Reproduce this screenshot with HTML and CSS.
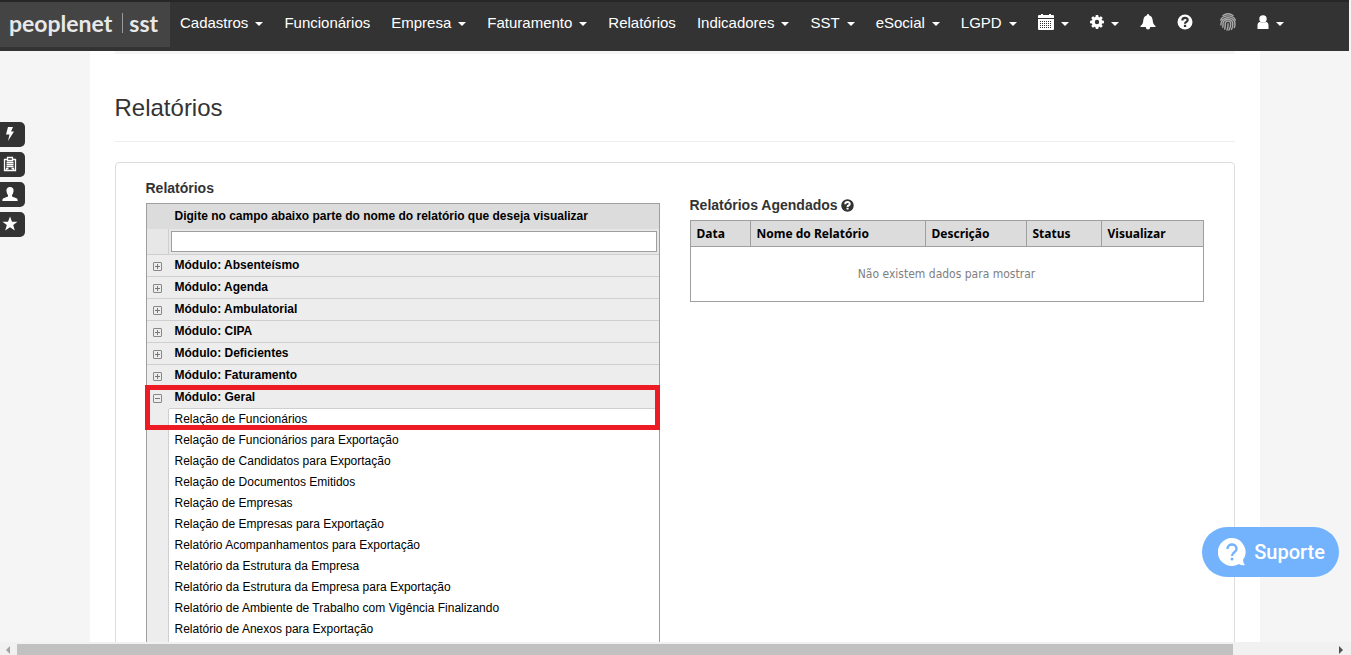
FILE: index.html
```
<!DOCTYPE html>
<html lang="pt-BR">
<head>
    <meta charset="UTF-8">
    <meta name="viewport" content="width=device-width, initial-scale=1">
    <title>Relatórios</title>
    <link rel="stylesheet" href="styles.css">
</head>
<body>
    <header class="navbar">
        <a href="#" class="brand"><span>peoplenet</span><span class="brand-sst">sst</span></a>
        <nav class="menu">
            <a href="#">Cadastros <i class="caret"></i></a>
            <a href="#">Funcionários</a>
            <a href="#">Empresa <i class="caret"></i></a>
            <a href="#">Faturamento <i class="caret"></i></a>
            <a href="#">Relatórios</a>
            <a href="#">Indicadores <i class="caret"></i></a>
            <a href="#">SST <i class="caret"></i></a>
            <a href="#">eSocial <i class="caret"></i></a>
            <a href="#">LGPD <i class="caret"></i></a>
            <a href="#" aria-label="Calendário">
                <svg width="16" height="16" viewBox="0 0 16 16"><path fill="#fff" d="M1 1h2V0h2v1h6V0h2v1h2q1 0 1 1v2H0V2q0-1 1-1zM0 5h16v10q0 1-1 1H1q-1 0-1-1z"/><path stroke="#333" stroke-width="1" stroke-dasharray="1 1" d="M2 7.500h12M2 9.500h12M2 11.500h12M2 13.500h12"/></svg>
                <i class="caret"></i>
            </a>
            <a href="#" aria-label="Configurações">
                <svg width="14" height="16" viewBox="0 0 14 16"><g fill="#fff"><rect x="5.500" y="1" width="3" height="14" rx="1"/><rect x="5.500" y="1" width="3" height="14" rx="1" transform="rotate(45 7 8)"/><rect x="5.500" y="1" width="3" height="14" rx="1" transform="rotate(90 7 8)"/><rect x="5.500" y="1" width="3" height="14" rx="1" transform="rotate(135 7 8)"/></g><circle cx="7" cy="8" r="3.700" fill="#333" stroke="#fff" stroke-width="3"/></svg>
                <i class="caret"></i>
            </a>
            <a href="#" aria-label="Notificações">
                <svg width="16" height="16" viewBox="0 0 16 16"><path fill="#fff" d="M8 0q1.300 0 1.300 1.500C12 2.200 12.500 4.500 12.800 7c.3 2.500 1 3.500 2.700 5v1h-5.200Q10 15.500 8 15.500T5.700 13H.5v-1c1.700-1.500 2.400-2.500 2.700-5 .3-2.500.8-4.800 3.500-5.500Q6.700 0 8 0z"/></svg>
            </a>
            <a href="#" aria-label="Ajuda">
                <svg width="16" height="16" viewBox="0 0 16 16"><circle cx="8" cy="8" r="7.500" fill="#fff"/><path fill="none" stroke="#333" stroke-width="2.200" d="M5.300 6.500C5.300 3 10.700 3 10.700 6c0 1.900-2.700 1.800-2.700 3.700"/><path fill="#333" d="M6.900 10.800h2.300V13H6.900z"/></svg>
            </a>
            <a href="#" class="finger" aria-label="Biometria">
                <svg width="16" height="18" viewBox="0 0 16 18"><g fill="none" stroke="#aaa" stroke-width="1.400" stroke-linecap="round"><path d="M3 2.500Q8-1 13 2.500"/><path d="M.7 7C3 1.500 13 1.500 15.300 7"/><path d="M1 12C0 3 15 2 15 11q0 2-.7 3.500"/><path d="M2.700 14.300Q3.300 13 3 10.500C3 5 12.800 5 12.800 11q0 3-1.300 5.300"/><path d="M4.700 16Q5.500 13.500 5.200 10.500C5.500 7.300 10.700 7.300 10.700 11q0 3.500-1.800 6"/><path d="M7 17Q8.300 14 8 10.700"/></g></svg>
            </a>
            <a href="#" aria-label="Usuário">
                <svg width="12" height="16" viewBox="0 0 12 16"><circle cx="6" cy="5" r="3.700" fill="#fff"/><path fill="#fff" d="M.5 15V11.500C.5 9.500 1.500 8 3 8q3 1.500 6 0c1.500 0 2.500 1.500 2.500 3.500V15z"/></svg>
                <i class="caret"></i>
            </a>
        </nav>
    </header>

    <aside class="shortcuts">
        <button aria-label="Acesso rápido"><svg width="16" height="16" viewBox="0 0 16 16"><path fill="#fff" d="M6 1h5L9 5.500h3L6 15l1.500-6.500H4z"/></svg></button>
        <button aria-label="Empresa"><svg width="16" height="16" viewBox="0 0 16 16"><path fill="none" stroke="#fff" stroke-width="1.300" d="M5.500 3.500h-3v11h11v-11h-3M5.500 1.500h5v3h-5zM4.500 6.500h7M4.500 8.500h7M4.500 10.500h7M4.500 14v-1.500h2M11.500 14v-1.500h-2"/></svg></button>
        <button aria-label="Funcionário"><svg width="16" height="16" viewBox="0 0 16 16"><path fill="#fff" d="M8 1c2.500 0 4 1.500 3.500 4.500Q11 8 10 9v1.500l5 2q.7.500.7 2.500H.3q0-2 .7-2.500l5-2V9Q5 8 4.500 5.500C4 2.500 5.500 1 8 1z"/></svg></button>
        <button aria-label="Favoritos"><svg width="16" height="16" viewBox="0 0 16 16"><path fill="#fff" d="M8 .5l2 5.200h5.500L11.200 9l1.600 5.500L8 11.300l-4.800 3.200L4.800 9 .5 5.700H6z"/></svg></button>
    </aside>

    <main class="page">
        <div class="container">
            <div class="top-line"></div>
            <h1>Relatórios</h1>
            <div class="panel">
                <section>
                    <h2 id="lblRelatorios">Relatórios</h2>
                    <table class="tree" aria-labelledby="lblRelatorios">
                        <thead>
                            <tr><th class="btn-col"></th><th><label for="filtro">Digite no campo abaixo parte do nome do relatório que deseja visualizar</label></th></tr>
                        </thead>
                        <tbody>
                            <tr class="filter"><td></td><td><input type="text" id="filtro"></td></tr>
                            <tr class="group"><td><button class="expand" aria-label="Expandir"></button></td><td>Módulo: Absenteísmo</td></tr>
                            <tr class="group"><td><button class="expand" aria-label="Expandir"></button></td><td>Módulo: Agenda</td></tr>
                            <tr class="group"><td><button class="expand" aria-label="Expandir"></button></td><td>Módulo: Ambulatorial</td></tr>
                            <tr class="group"><td><button class="expand" aria-label="Expandir"></button></td><td>Módulo: CIPA</td></tr>
                            <tr class="group"><td><button class="expand" aria-label="Expandir"></button></td><td>Módulo: Deficientes</td></tr>
                            <tr class="group"><td><button class="expand" aria-label="Expandir"></button></td><td>Módulo: Faturamento</td></tr>
                            <tr class="group marked"><td><button class="expand open" aria-label="Recolher"></button><div class="highlight"></div></td><td>Módulo: Geral</td></tr>
                            <tr class="item"><td></td><td>Relação de Funcionários</td></tr>
                            <tr class="item"><td></td><td>Relação de Funcionários para Exportação</td></tr>
                            <tr class="item"><td></td><td>Relação de Candidatos para Exportação</td></tr>
                            <tr class="item"><td></td><td>Relação de Documentos Emitidos</td></tr>
                            <tr class="item"><td></td><td>Relação de Empresas</td></tr>
                            <tr class="item"><td></td><td>Relação de Empresas para Exportação</td></tr>
                            <tr class="item"><td></td><td>Relatório Acompanhamentos para Exportação</td></tr>
                            <tr class="item"><td></td><td>Relatório da Estrutura da Empresa</td></tr>
                            <tr class="item"><td></td><td>Relatório da Estrutura da Empresa para Exportação</td></tr>
                            <tr class="item"><td></td><td>Relatório de Ambiente de Trabalho com Vigência Finalizando</td></tr>
                            <tr class="item last"><td></td><td>Relatório de Anexos para Exportação</td></tr>
                        </tbody>
                    </table>
                </section>
                <section class="scheduled">
                    <h2 id="lblAgendados">Relatórios Agendados
                        <svg width="13" height="13" viewBox="0 0 16 16"><circle cx="8" cy="8" r="7.700" fill="#333"/><path fill="none" stroke="#fff" stroke-width="2.400" d="M5.200 6.500C5.200 3 10.800 3 10.800 6c0 1.900-2.800 1.800-2.800 3.700"/><path fill="#fff" d="M6.800 10.800h2.500V13H6.800z"/></svg>
                    </h2>
                    <table class="grid" aria-labelledby="lblAgendados">
                        <thead>
                            <tr><th class="col-data">Data</th><th class="col-nome">Nome do Relatório</th><th class="col-desc">Descrição</th><th class="col-status">Status</th><th>Visualizar</th></tr>
                        </thead>
                        <tbody>
                            <tr><td colspan="5">Não existem dados para mostrar</td></tr>
                        </tbody>
                    </table>
                </section>
            </div>
        </div>
    </main>

    <button class="support">
        <svg width="28" height="28" viewBox="0 0 28 28"><path fill="#fff" d="M14 0a14 14 0 1 0 7 26q3 2 6 1-2-2-2-5A14 14 0 0 0 14 0z"/><path fill="none" stroke="#73b3fe" stroke-width="2.400" d="M9.500 11c0-6 9-6 9 0 0 3.500-4.500 3.200-4.500 7"/><circle cx="14" cy="21" r="1.500" fill="#73b3fe"/></svg>
        Suporte
    </button>

    <footer class="scrollbar">
        <span class="arrow left"></span>
        <span class="track"><span class="thumb"></span></span>
        <span class="arrow right"></span>
    </footer>
</body>
</html>
```
FILE: styles.css
```
* {
    box-sizing: border-box;
}

body {
    display: flex;
    flex-direction: column;
    height: 100vh;
    margin: 0;
    overflow: hidden;
    background-color: #f5f5f5;
    color: #333;
    font-family: "Liberation Sans", Arial, sans-serif;
    font-size: 12px;
}

.navbar {
    display: flex;
    flex: none;
    height: 51px;
    margin-right: 2px;
    border-top: 2px solid #262626;
    background-color: #333;
}

.brand {
    display: flex;
    align-items: center;
    width: 170px;
    height: 45px;
    padding: 0 0 4px 9px;
    background-color: #444;
    color: #e8e8e8;
    font-family: Lato, sans-serif;
    font-size: 23px;
    font-weight: bold;
    line-height: 20px;
    text-decoration: none;
}

.brand-sst {
    margin-left: 10px;
    padding-left: 6px;
    border-left: 1px solid #999;
}

.menu {
    display: flex;
    gap: 21px;
    height: 40px;
    padding-left: 10px;
}

.menu a {
    display: flex;
    align-items: center;
    gap: 7px;
    color: #fff;
    font-size: 15px;
    text-decoration: none;
    white-space: nowrap;
}

.menu a:hover {
    color: #ccc;
}

.menu .finger {
    margin: 0 0 0 6px;
}

.caret {
    border: 4px solid transparent;
    border-top-color: #fff;
    border-bottom: 0;
    margin-top: 3px;
}

.shortcuts {
    position: fixed;
    top: 122px;
    left: 0;
    display: flex;
    flex-direction: column;
    gap: 5px;
}

.shortcuts button {
    width: 25px;
    height: 25px;
    padding: 0 0 2px 2px;
    border: 0;
    border-radius: 0 5px 5px 0;
    background-color: #333;
    text-align: left;
    cursor: pointer;
}

.shortcuts svg {
    display: block;
}

.page {
    flex: 1;
    margin-right: 2px;
    overflow: hidden;
}

.container {
    max-width: 1170px;
    margin: 0 auto;
    padding: 0 25px;
    background-color: #fff;
}

.top-line {
    height: 3px;
    background-color: #f5f5f5;
}

h1 {
    margin: 0 0 20px;
    padding: 40px 0 19px;
    border-bottom: 1px solid #eee;
    font-size: 24px;
    font-weight: normal;
    line-height: 28px;
}

.panel {
    display: grid;
    grid-template-columns: 1fr 1fr;
    gap: 30px;
    padding: 17px 30px;
    border: 1px solid #ddd;
    border-radius: 4px;
}

h2 {
    margin: 0;
    font-size: 14px;
    line-height: 16px;
    padding-bottom: 7px;
}

h2 svg {
    vertical-align: -2px;
}

table {
    width: 100%;
    border-spacing: 0;
    table-layout: fixed;
    color: #000;
}

.tree {
    border: 1px solid #9f9f9f;
}

.tree th,
.tree td {
    padding: 0 6px 2px;
    text-align: left;
}

.tree th {
    height: 25px;
    background-color: #dcdcdc;
}

.tree .btn-col {
    width: 22px;
}

.tree .filter td {
    height: 26px;
    padding: 0 2px;
    border-bottom: 1px solid #cfcfcf;
    background-color: #e7e7e7;
}

.filter td:first-child,
.item td:first-child {
    border-right: 1px solid #cfcfcf;
}

.filter input {
    display: block;
    width: 100%;
    height: 21px;
    border: 1px solid #9f9f9f;
}

.tree .group td {
    height: 22px;
    border-bottom: 1px solid #cfcfcf;
    background-color: #ededed;
    font-weight: bold;
}

.tree .marked td:first-child {
    border-bottom-color: #ededed;
}

.expand {
    display: block;
    width: 9px;
    height: 9px;
    margin-top: 4px;
    padding: 0;
    border: 1px solid #888;
    border-radius: 1px;
    background: linear-gradient(#777, #777) center / 5px 1px no-repeat,
                linear-gradient(#777, #777) center / 1px 5px no-repeat;
}

.expand.open {
    background: linear-gradient(#777, #777) center / 5px 1px no-repeat;
}

.item td {
    height: 21px;
}

.item td:first-child {
    background-color: #ededed;
}

.tree .last td {
    height: 42px;
    padding-top: 3px;
    vertical-align: top;
}

/* red frame over the open module and its first report */
.marked {
    position: relative;
}

.highlight {
    position: absolute;
    z-index: 1;
    top: -2px;
    right: -1px;
    left: -2px;
    height: 45px;
    border: 5px solid #ed1c24;
}

.scheduled {
    padding-top: 17px;
}

.grid {
    border: 1px solid #9f9f9f;
    font-family: "Noto Sans", Tahoma, sans-serif;
}

.grid th {
    height: 26px;
    padding: 0 6px;
    border-right: 1px solid #9f9f9f;
    border-bottom: 1px solid #9f9f9f;
    background-color: #dcdcdc;
    text-align: left;
}

.grid th:last-child {
    border-right: 0;
}

.grid td {
    height: 54px;
    padding: 0;
    color: #808080;
    font-family: "DejaVu Sans Condensed", Tahoma, sans-serif;
    text-align: center;
}

.col-data {
    width: 60px;
}

.col-nome {
    width: 175px;
}

.col-desc {
    width: 101px;
}

.col-status {
    width: 75px;
}

.support {
    position: fixed;
    right: 12px;
    bottom: 78px;
    display: flex;
    align-items: center;
    gap: 8px;
    height: 50px;
    padding: 0 14px 0 16px;
    border: 0;
    border-radius: 25px;
    background-color: #73b3fe;
    color: #fff;
    font-family: Roboto, sans-serif;
    font-size: 20px;
    font-weight: 500;
    cursor: pointer;
}

.scrollbar {
    display: flex;
    flex: none;
    align-items: center;
    height: 13px;
    background-color: #f1f1f1;
}

.track {
    flex: 1;
    height: 11px;
    margin: 2px 0 0 3px;
}

.thumb {
    display: block;
    width: 92%;
    height: 11px;
    background-color: #c1c1c1;
}

.arrow {
    border: 4px solid transparent;
}

.arrow.left {
    margin: 2px 4px 0 2px;
    border-right-color: #a3a3a3;
}

.arrow.right {
    margin: 2px 8px 0 0;
    border-right: 0;
    border-left-color: #505050;
}
```
